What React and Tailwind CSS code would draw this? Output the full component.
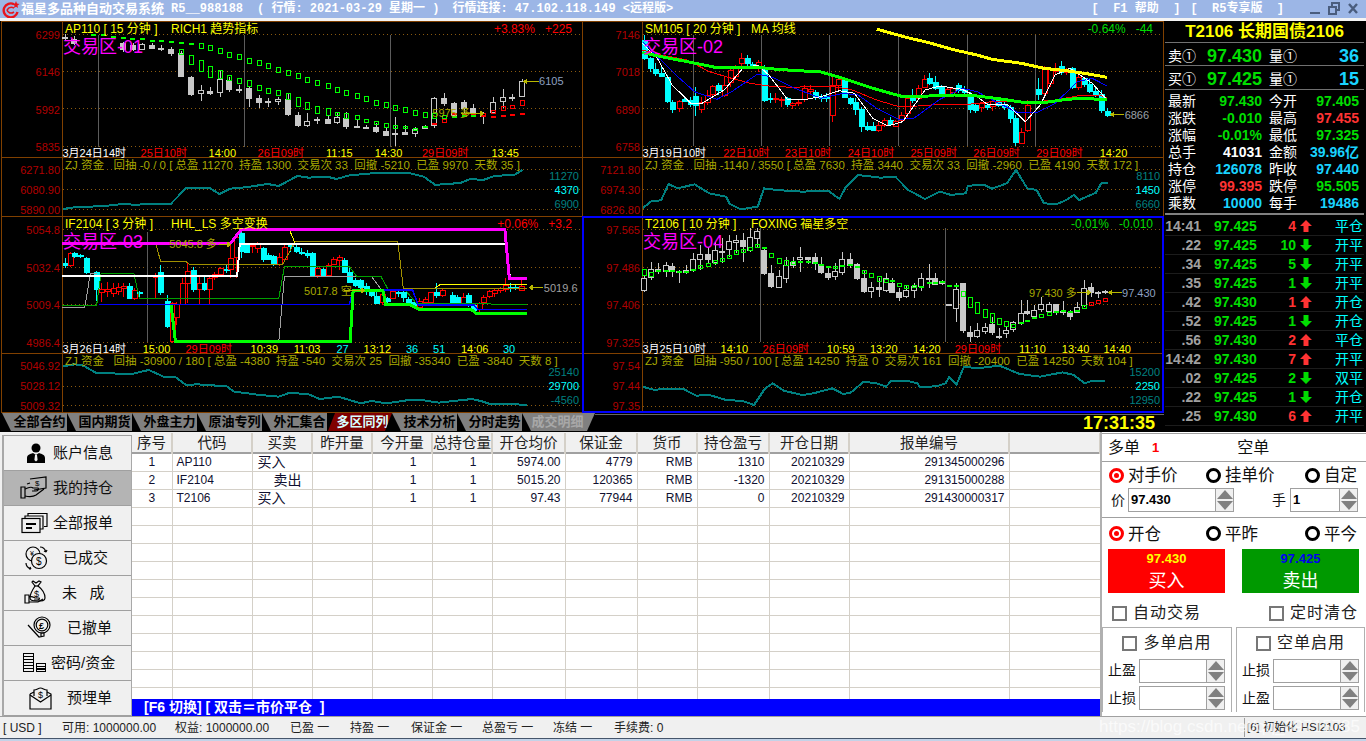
import React from "react";

const G = "#00ff00", R = "#ff0000";
const Y = "#ffff00", W = "#ffffff", RT = "#ff0000", C = "#00ffff";

const p = (a) => { const o = []; for (let i = 0; i < a.length; i += 2) o.push([a[i], a[i + 1]]); return o; };

const panels = [
  {
    ox: 0, oy: 0, left: 63, mainTop: 22, subTop: 158, axisW: "w-[60px]", chartW: "w-[519px]", up: "#c8c8c8", down: "#c8c8c8", bw: 5,
    title: "AP110 [ 15 分钟 ]", ind: "RICH1 趋势指标", pct: "+3.83%", chg: "+225", pc: "text-[#ff0000]", name: "交易区-01",
    axis: ["6299", "6146", "5992", "5835"], sub: ["6271.80", "6080.90", "5890.00"], right: ["11270", "4370", "6900"],
    zj: "ZJ 资金   回抽 -0 / 0 [ 总盈 11270  持盈 1300  交易次 33  回撤 -5210  已盈 9970  天数 35 ]",
    dots: [103, 213, 325, 438], subDots: [508, 568, 628], verts: [264, 657, 1050], vy: [105, 440],
    times: [[168, 460, "3月24日14时", W], [378, 460, "25日10时", RT], [561, 460, "14:00", Y], [693, 460, "26日09时", RT], [877, 460, "11:15", Y], [1008, 460, "14:30", Y], [1135, 460, "29日09时", RT], [1322, 460, "13:45", Y]],
    notes: [[1163, 340, "5975 多", "#a8a800"], [1450, 243, "6105", "#8ea0c0"]], arrows: [[1240, 1300, 338, 1], [1410, 1450, 242, 0]],
    candles: [[175, 102, 112, 114, 122, 1], [198, 108, 116, 128, 135, 0], [330, 125, 130, 148, 155, 0], [358, 130, 135, 148, 152, 0], [383, 128, 132, 146, 150, 1], [408, 130, 136, 144, 148, 0], [434, 135, 144, 146, 152, 0], [461, 140, 147, 160, 168, 0], [488, 152, 160, 228, 232, 0], [513, 228, 232, 282, 288, 0], [540, 255, 271, 280, 303, 1], [566, 262, 272, 278, 285, 0], [592, 210, 237, 277, 292, 1], [617, 230, 240, 266, 275, 0], [644, 255, 267, 270, 280, 0], [670, 258, 264, 294, 322, 0], [697, 285, 294, 306, 325, 0], [722, 295, 302, 305, 320, 0], [748, 290, 296, 302, 315, 1], [775, 282, 298, 342, 347, 0], [802, 335, 346, 376, 380, 0], [827, 340, 362, 375, 380, 1], [853, 350, 358, 359, 372, 0], [881, 345, 357, 368, 372, 0], [907, 335, 352, 368, 372, 1], [932, 335, 353, 378, 388, 0], [959, 360, 378, 381, 385, 0], [985, 375, 380, 382, 388, 0], [1012, 370, 380, 393, 398, 0], [1037, 385, 394, 405, 408, 0], [1063, 352, 398, 398, 438, 0], [1090, 375, 395, 401, 406, 0], [1117, 380, 387, 400, 410, 1], [1142, 375, 378, 385, 385, 0], [1168, 290, 295, 375, 385, 1], [1195, 278, 294, 310, 318, 0], [1222, 305, 308, 345, 355, 0], [1247, 300, 306, 325, 345, 0], [1273, 312, 325, 340, 350, 0], [1300, 335, 340, 350, 372, 1], [1327, 292, 305, 335, 340, 1], [1352, 268, 292, 303, 325, 1], [1378, 282, 290, 292, 302, 0], [1405, 238, 242, 288, 290, 1]],
    squares: [
      [250, 104, 0, G], [278, 105, 0, G], [303, 112, 0, G], [330, 114, 0, G], [356, 116, 0, G], [383, 118, 0, G], [408, 122, 0, G], [434, 123, 0, G], [461, 126, 0, G], [488, 129, 0, G], [513, 131, 0, G],
      ...[[540, 136], [566, 143], [592, 152], [617, 162], [644, 170], [670, 180], [697, 188], [722, 197], [748, 208], [775, 217], [802, 227], [827, 238], [853, 247], [881, 257], [907, 268], [932, 277], [959, 287], [985, 296], [1012, 306], [1037, 312], [1063, 321], [1090, 328], [1117, 336], [1142, 343]].map((a) => [a[0], a[1], 14, G]),
      [1168, 347, 14, G], [488, 154, 14, G], [513, 177, 28, G], [540, 197, 34, G], [566, 215, 34, G], [592, 223, 24, G], [617, 233, 16, G], [644, 240, 16, G], [670, 250, 18, G], [697, 262, 16, G], [722, 270, 16, G], [748, 278, 14, G], [775, 288, 18, G], [802, 305, 26, G], [827, 317, 22, G], [853, 327, 22, G], [881, 334, 20, G], [907, 340, 10, G], [932, 346, 14, G], [959, 352, 12, G], [985, 360, 8, G], [1012, 367, 10, G], [1037, 374, 12, G], [1063, 378, 10, G], [1090, 382, 6, G], [1117, 386, 4, G], [1142, 381, 0, G], [1195, 350, 10, G], [1222, 352, 0, G], [1247, 349, 0, G], [1273, 348, 0, G],
      [1168, 372, 0, R], [1195, 362, 10, R], [1222, 343, 0, R], [1247, 342, 0, R], [1273, 343, 0, R], [1300, 348, 0, R], [1327, 350, 0, R], [1352, 349, 0, R], [1378, 344, 0, R], [1405, 342, 0, R], [1300, 342, 10, R], [1327, 334, 8, R], [1352, 325, 12, R], [1378, 318, 10, R], [1405, 306, 14, R],
    ],
    lines: [],
    subLine: [170, 627, 200, 622, 280, 618, 330, 612, 360, 614, 460, 611, 500, 565, 565, 565, 590, 582, 620, 566, 660, 562, 720, 552, 750, 558, 800, 528, 830, 533, 880, 530, 905, 537, 940, 526, 1010, 519, 1100, 519, 1140, 530, 1170, 554, 1200, 553, 1240, 548, 1265, 537, 1300, 540, 1330, 528, 1385, 524, 1405, 510],
  },
  {
    ox: 583, oy: 0, left: 643, mainTop: 22, subTop: 158, axisW: "w-[59px]", chartW: "w-[520px]", up: "#ff0000", down: "#00ffff", bw: 4,
    title: "SM105 [ 20 分钟 ]", ind: "MA 均线", pct: "-0.64%", chg: "-44", pc: "text-[#00dd00]", name: "交易区-02",
    axis: ["7146", "7018", "6890", "6758"], sub: ["7121.80", "6974.30", "6826.80"], right: ["8110", "1450", "6660"],
    zj: "ZJ 资金   回抽 -1140 / 3550 [ 总盈 7630  持盈 3440  交易次 33  回撤 -2960  已盈 4190  天数 172 ]",
    dots: [103, 213, 325, 438], subDots: [508, 568, 628], verts: [295, 480, 663, 848, 1033, 1217], vy: [105, 438],
    times: [[160, 460, "3月19日10时", W], [377, 460, "22日10时", RT], [543, 460, "23日10时", RT], [712, 460, "24日10时", RT], [881, 460, "25日09时", RT], [1050, 460, "26日09时", RT], [1219, 460, "29日09时", RT], [1390, 460, "14:20", Y]],
    notes: [[1457, 345, "6866", "#9aa0a8"]], arrows: [[1420, 1455, 343, 0]],
    candles: [[165, 105, 120, 175, 180, 0], [180, 170, 175, 205, 215, 0], [195, 190, 207, 220, 228, 0], [210, 200, 220, 228, 232, 0], [225, 225, 232, 305, 310, 0], [240, 300, 306, 327, 340, 0], [257, 300, 304, 325, 335, 1], [272, 290, 296, 302, 305, 0], [287, 290, 300, 313, 320, 0], [302, 260, 288, 315, 347, 0], [318, 290, 306, 326, 340, 1], [333, 270, 284, 305, 315, 1], [348, 255, 257, 282, 290, 1], [364, 250, 255, 270, 285, 0], [380, 230, 256, 285, 290, 1], [395, 205, 210, 245, 260, 1], [410, 195, 200, 226, 240, 1], [425, 160, 175, 190, 200, 1], [440, 165, 175, 190, 200, 0], [455, 185, 192, 197, 205, 0], [470, 180, 186, 200, 215, 1], [487, 195, 205, 300, 305, 0], [502, 280, 295, 298, 310, 0], [517, 280, 295, 297, 310, 1], [533, 290, 296, 298, 320, 1], [548, 290, 293, 312, 322, 0], [563, 305, 310, 315, 328, 1], [578, 300, 305, 306, 318, 1], [594, 255, 265, 297, 305, 1], [610, 255, 266, 271, 285, 1], [625, 270, 275, 290, 300, 0], [640, 282, 290, 292, 305, 0], [655, 280, 288, 293, 305, 0], [670, 225, 254, 345, 365, 1], [687, 235, 238, 255, 270, 1], [702, 238, 240, 290, 295, 0], [717, 290, 295, 310, 315, 0], [733, 295, 306, 328, 345, 0], [749, 320, 327, 378, 395, 0], [764, 365, 378, 388, 392, 0], [779, 365, 378, 390, 392, 0], [794, 365, 375, 390, 395, 1], [810, 355, 360, 375, 380, 1], [825, 350, 360, 372, 378, 0], [840, 360, 362, 376, 378, 1], [855, 335, 344, 360, 368, 1], [871, 285, 294, 340, 358, 1], [886, 268, 288, 300, 310, 0], [902, 255, 265, 295, 300, 1], [917, 225, 238, 262, 265, 1], [932, 220, 234, 248, 256, 0], [948, 228, 245, 262, 270, 0], [963, 255, 260, 288, 292, 0], [978, 260, 268, 285, 290, 1], [993, 260, 263, 274, 280, 1], [1009, 250, 256, 270, 278, 0], [1024, 258, 266, 276, 290, 0], [1040, 275, 286, 328, 340, 0], [1055, 310, 316, 330, 340, 0], [1070, 305, 310, 322, 335, 1], [1086, 310, 315, 322, 330, 0], [1101, 300, 302, 318, 332, 1], [1117, 296, 300, 314, 322, 0], [1133, 305, 312, 322, 330, 0], [1148, 315, 322, 355, 368, 0], [1163, 345, 355, 428, 438, 0], [1179, 385, 396, 428, 432, 1], [1194, 300, 314, 390, 395, 1], [1224, 235, 268, 282, 300, 0], [1240, 198, 205, 280, 290, 1], [1255, 200, 208, 250, 260, 1], [1270, 190, 205, 215, 225, 1], [1285, 183, 198, 215, 225, 0], [1300, 205, 210, 215, 225, 1], [1316, 200, 205, 262, 268, 0], [1331, 225, 232, 262, 270, 1], [1347, 230, 234, 252, 260, 0], [1362, 235, 252, 272, 280, 0], [1378, 262, 272, 282, 290, 0], [1394, 270, 283, 332, 338, 0], [1410, 325, 333, 345, 350, 0]],
    squares: [],
    lines: [
      ["#ff0000", 1, [160, 150, 210, 165, 280, 180, 340, 215, 400, 235, 450, 250, 500, 258, 560, 262, 660, 258, 720, 268, 790, 300, 850, 320, 900, 318, 960, 313, 1020, 315, 1100, 305, 1200, 305, 1260, 302, 1330, 288, 1390, 285, 1410, 295]],
      ["#0000ff", 1, [160, 125, 200, 170, 250, 225, 300, 275, 360, 298, 400, 275, 470, 222, 510, 232, 570, 265, 640, 295, 700, 280, 740, 285, 790, 325, 850, 358, 890, 355, 960, 298, 1020, 265, 1060, 275, 1110, 305, 1170, 338, 1220, 338, 1270, 310, 1330, 245, 1370, 235, 1410, 258]],
      ["#ffffff", 1, [160, 130, 200, 175, 240, 255, 290, 310, 320, 310, 380, 270, 430, 205, 470, 195, 500, 225, 550, 298, 590, 300, 640, 290, 690, 272, 730, 280, 780, 355, 820, 378, 860, 365, 920, 270, 960, 258, 1020, 268, 1060, 290, 1090, 315, 1140, 312, 1190, 365, 1230, 315, 1270, 225, 1310, 205, 1370, 250, 1410, 300]],
      ["#00ff00", 3, [160, 158, 210, 170, 290, 187, 360, 203, 490, 204, 520, 208, 640, 216, 700, 235, 780, 265, 860, 290, 930, 288, 1000, 285, 1060, 288, 1130, 298, 1190, 308, 1240, 308, 1300, 298, 1350, 295, 1410, 300]],
      ["#ffff00", 3, [790, 87, 830, 100, 880, 115, 920, 125, 1000, 150, 1060, 165, 1100, 178, 1180, 190, 1240, 205, 1300, 212, 1360, 222, 1410, 232]],
    ],
    subLine: [160, 625, 185, 603, 210, 601, 230, 552, 255, 565, 300, 553, 340, 580, 385, 590, 395, 612, 425, 628, 470, 620, 487, 565, 520, 570, 590, 575, 660, 572, 690, 597, 705, 565, 740, 525, 800, 533, 840, 530, 875, 570, 920, 597, 960, 575, 990, 585, 1030, 580, 1035, 557, 1080, 555, 1100, 566, 1140, 550, 1165, 510, 1195, 565, 1220, 570, 1240, 610, 1275, 612, 1300, 600, 1320, 585, 1335, 600, 1380, 578, 1395, 548, 1412, 548],
  },
  {
    ox: 0, oy: 215, left: 63, mainTop: 217, subTop: 354, axisW: "w-[60px]", chartW: "w-[519px]", up: "#ff0000", down: "#00ffff", bw: 4,
    title: "IF2104 [ 3 分钟 ]", ind: "HHL_LS 多空变换", pct: "+0.06%", chg: "+3.2", pc: "text-[#ff0000]", name: "交易区-03",
    axis: ["5054.8", "5032.4", "5009.4", "4986.4"], sub: ["5046.92", "5028.12", "5009.32"], right: ["25140", "29700", "-4560"],
    zj: "ZJ 资金   回抽 -30900 / 180 [ 总盈 -4380  持盈 -540  交易次 25  回撤 -35340  已盈 -3840  天数 8 ]",
    dots: [43, 155, 268, 382], subDots: [512, 570], verts: [396], vy: [50, 380],
    times: [[168, 403, "3月26日14时", W], [384, 403, "15:00", Y], [499, 403, "29日09时", RT], [674, 403, "10:39", Y], [790, 403, "11:03", Y], [905, 403, "27", C], [978, 403, "13:12", Y], [1092, 403, "36", C], [1165, 403, "51", C], [1240, 403, "14:06", Y], [1353, 403, "30", C]],
    notes: [[455, 88, "5045.8 多", "#a8a800"], [818, 228, "5017.8 空", "#a8a800"], [1463, 218, "5019.6", "#a0a0a0"]], arrows: [[590, 620, 86, 1], [925, 980, 226, 1], [1425, 1460, 217, 0]],
    candles: [[175, 130, 145, 152, 160, 0], [187, 110, 115, 152, 155, 1], [200, 112, 115, 123, 130, 0], [216, 118, 120, 122, 128, 0], [232, 125, 130, 172, 178, 0], [258, 168, 172, 222, 258, 0], [273, 205, 222, 232, 260, 1], [288, 200, 222, 228, 245, 1], [303, 205, 218, 232, 245, 1], [317, 205, 217, 230, 240, 1], [331, 205, 212, 218, 245, 1], [346, 205, 212, 248, 250, 0], [360, 220, 226, 250, 255, 1], [375, 228, 232, 233, 250, 0], [418, 175, 182, 184, 250, 1], [431, 150, 170, 230, 240, 0], [448, 240, 257, 332, 340, 0], [463, 260, 265, 380, 385, 1], [474, 262, 268, 306, 330, 1], [490, 190, 203, 265, 270, 1], [504, 145, 168, 205, 265, 1], [520, 155, 165, 222, 230, 0], [534, 185, 205, 222, 270, 1], [549, 185, 205, 222, 228, 0], [563, 180, 190, 222, 268, 1], [576, 170, 178, 188, 195, 1], [592, 155, 160, 178, 185, 1], [607, 150, 162, 165, 175, 0], [620, 90, 128, 160, 190, 1], [634, 55, 65, 125, 190, 1], [648, 45, 55, 110, 130, 0], [662, 85, 87, 112, 115, 0], [677, 85, 90, 92, 115, 1], [691, 80, 85, 100, 115, 1], [707, 95, 98, 132, 140, 0], [722, 115, 120, 132, 135, 0], [735, 120, 122, 145, 152, 0], [750, 115, 125, 145, 152, 1], [765, 85, 97, 132, 140, 1], [780, 85, 90, 92, 110, 0], [795, 85, 95, 108, 115, 0], [810, 100, 110, 113, 120, 0], [825, 105, 113, 120, 130, 0], [838, 110, 115, 180, 185, 0], [853, 155, 160, 180, 188, 1], [868, 160, 162, 180, 185, 0], [881, 145, 150, 180, 185, 1], [897, 125, 133, 148, 150, 1], [912, 120, 125, 135, 165, 1], [925, 130, 135, 170, 175, 0], [940, 160, 172, 202, 205, 0], [955, 188, 195, 210, 215, 0], [968, 192, 195, 215, 225, 0], [984, 205, 212, 225, 240, 0], [997, 225, 232, 240, 245, 0], [1012, 230, 243, 264, 268, 0], [1027, 232, 238, 262, 270, 1], [1040, 245, 250, 258, 265, 0], [1055, 225, 228, 248, 252, 1], [1070, 228, 232, 235, 245, 0], [1083, 228, 232, 248, 262, 0], [1098, 245, 252, 265, 268, 0], [1113, 255, 262, 270, 278, 0], [1128, 250, 258, 275, 285, 1], [1143, 245, 252, 262, 268, 1], [1157, 230, 232, 262, 265, 1], [1172, 205, 232, 240, 250, 0], [1188, 220, 225, 240, 245, 1], [1215, 232, 240, 265, 270, 0], [1230, 240, 245, 268, 272, 0], [1245, 235, 245, 265, 270, 1], [1258, 235, 240, 270, 275, 0], [1273, 265, 270, 285, 292, 0], [1288, 262, 265, 282, 290, 1], [1300, 240, 245, 260, 265, 1], [1315, 225, 228, 242, 250, 1], [1330, 222, 225, 235, 245, 1], [1345, 215, 220, 225, 235, 1], [1358, 190, 210, 222, 230, 1], [1372, 205, 215, 218, 230, 0], [1385, 210, 215, 217, 225, 0], [1402, 195, 212, 224, 228, 1]],
    squares: [],
    lines: [
      ["#a0a0a0", 1, [168, 278, 228, 278, 243, 175, 262, 175]],
      ["#a0a0a0", 1, [750, 380, 765, 185, 1000, 185, 1030, 230]],
      ["#00a000", 1, [168, 270, 260, 270, 272, 175, 360, 175, 375, 250, 750, 250, 765, 155, 940, 155, 960, 185, 1025, 185, 1045, 225, 1090, 225, 1120, 265, 1417, 268]],
      ["#a09000", 1, [420, 88, 432, 140, 500, 140, 510, 148, 760, 148, 795, 78, 1070, 78, 1085, 220, 1417, 220]],
      ["#ffff00", 1, [780, 48, 795, 88]],
      ["#ffff00", 1, [1170, 218, 1185, 208, 1417, 208]],
      ["#0000ff", 1.5, [265, 268, 940, 268, 950, 225, 1110, 225, 1125, 270, 1275, 270, 1285, 284, 1417, 284]],
      ["#ffffff", 2, [168, 184, 638, 184, 645, 87, 1362, 87, 1372, 192, 1417, 192]],
      ["#ff00ff", 3, [168, 85, 620, 85, 650, 42, 1358, 42, 1370, 190, 1417, 190]],
      ["#00ff00", 3, [460, 270, 472, 380, 942, 380, 950, 225, 1030, 225, 1037, 268, 1100, 268, 1125, 282, 1265, 282, 1280, 294, 1417, 294]],
    ],
    subLine: [168, 455, 200, 448, 225, 452, 260, 475, 300, 475, 350, 478, 400, 465, 440, 485, 470, 485, 500, 510, 530, 508, 610, 514, 630, 530, 700, 540, 750, 545, 780, 533, 830, 538, 860, 552, 910, 545, 970, 565, 1000, 558, 1040, 565, 1100, 555, 1140, 556, 1180, 563, 1270, 552, 1300, 560, 1320, 568, 1390, 568, 1417, 570],
  },
  {
    ox: 583, oy: 215, left: 643, mainTop: 217, subTop: 354, axisW: "w-[59px]", chartW: "w-[520px]", up: "#c8c8c8", down: "#c8c8c8", bw: 5, active: true,
    title: "T2106 [ 10 分钟 ]", ind: "FOXING 福星多空", pct: "-0.01%", chg: "-0.010", pc: "text-[#00dd00]", name: "交易区-04",
    axis: ["97.565", "97.486", "97.406", "97.325"], sub: ["97.54", "97.44", "97.35"], right: ["15200", "2250", "12950"],
    zj: "ZJ 资金   回抽 -950 / 100 [ 总盈 14250  持盈 0  交易次 161  回撤 -20400  已盈 14250  天数 104 ]",
    dots: [43, 155, 268, 382], subDots: [515, 573], verts: [477, 974], vy: [40, 380],
    times: [[160, 403, "3月25日10时", W], [370, 403, "14:10", Y], [483, 403, "26日09时", RT], [656, 403, "10:59", Y], [772, 403, "13:20", Y], [888, 403, "14:20", Y], [1000, 403, "29日09时", RT], [1173, 403, "11:10", Y], [1288, 403, "13:40", Y], [1400, 403, "14:40", Y]],
    notes: [[1200, 235, "97.430 多", "#a8a800"], [1450, 234, "97.430", "#8ea0c0"]], arrows: [[1330, 1365, 232, 1], [1415, 1450, 232, 0]],
    candles: [[165, 180, 190, 225, 232, 1], [184, 140, 163, 188, 195, 1], [203, 145, 163, 170, 178, 0], [222, 140, 150, 168, 185, 1], [240, 145, 153, 168, 185, 0], [259, 165, 168, 172, 205, 0], [278, 150, 165, 172, 178, 0], [296, 115, 133, 165, 170, 1], [316, 90, 118, 132, 165, 1], [335, 95, 118, 132, 145, 0], [355, 80, 105, 142, 150, 1], [375, 70, 108, 112, 145, 1], [393, 60, 78, 103, 125, 1], [412, 60, 76, 82, 115, 1], [431, 55, 75, 92, 140, 0], [450, 40, 65, 105, 110, 1], [469, 40, 48, 68, 95, 1], [488, 95, 105, 173, 180, 0], [507, 150, 175, 215, 218, 0], [527, 165, 182, 215, 220, 1], [547, 125, 150, 188, 205, 1], [565, 125, 140, 150, 160, 0], [585, 95, 127, 133, 170, 1], [604, 125, 127, 132, 148, 0], [623, 115, 127, 145, 165, 0], [641, 125, 148, 172, 178, 0], [660, 160, 175, 188, 195, 0], [679, 145, 168, 182, 195, 1], [698, 110, 133, 173, 180, 1], [718, 115, 133, 152, 160, 0], [738, 145, 148, 190, 195, 0], [757, 165, 190, 230, 235, 0], [776, 200, 217, 230, 250, 1], [795, 190, 217, 222, 245, 0], [814, 175, 190, 225, 230, 1], [832, 190, 203, 230, 232, 0], [851, 220, 231, 245, 258, 0], [870, 210, 226, 245, 250, 1], [891, 205, 212, 225, 250, 1], [910, 175, 190, 215, 228, 1], [930, 148, 190, 192, 220, 1], [948, 175, 188, 205, 210, 0], [967, 195, 198, 205, 210, 0], [985, 266, 266, 269, 269, 0], [1004, 205, 222, 280, 322, 1], [1023, 205, 205, 345, 355, 0], [1042, 332, 352, 365, 380, 0], [1061, 325, 346, 365, 370, 1], [1082, 325, 337, 350, 358, 1], [1101, 305, 328, 352, 360, 0], [1120, 340, 362, 364, 372, 0], [1139, 335, 346, 356, 370, 1], [1158, 318, 322, 344, 350, 1], [1177, 255, 294, 325, 330, 1], [1195, 255, 288, 293, 300, 0], [1214, 270, 284, 302, 310, 1], [1233, 245, 268, 282, 290, 1], [1254, 262, 268, 290, 295, 1], [1273, 268, 268, 292, 300, 0], [1292, 258, 287, 291, 300, 0], [1311, 285, 290, 302, 315, 0], [1330, 260, 275, 290, 295, 1], [1349, 195, 218, 270, 275, 1], [1367, 205, 217, 232, 245, 0], [1386, 228, 232, 234, 250, 0], [1405, 225, 228, 232, 238, 0]],
    squares: [[165, 170, 18, G], [184, 176, 12, G], [203, 168, 0, G], [222, 168, 0, G], [240, 168, 0, G], [259, 170, 0, G], [278, 170, 0, G], [296, 164, 0, G], [316, 155, 8, G], [335, 147, 8, G], [355, 140, 10, G], [375, 133, 10, G], [393, 123, 8, G], [412, 111, 12, G], [431, 107, 8, G], [450, 100, 8, G], [469, 90, 10, G], [488, 98, 0, G], [507, 120, 12, G], [527, 135, 14, G], [547, 142, 16, G], [565, 143, 8, G], [585, 140, 0, G], [604, 142, 0, G], [623, 145, 0, G], [641, 150, 0, G], [660, 155, 0, G], [679, 157, 6, G], [698, 152, 0, G], [718, 151, 0, G], [738, 155, 0, G], [757, 168, 8, G], [776, 179, 12, G], [795, 190, 14, G], [814, 197, 10, G], [832, 198, 0, G], [851, 208, 10, G], [870, 213, 8, G], [891, 213, 6, G], [910, 215, 0, G], [930, 205, 0, G], [948, 203, 0, G], [967, 202, 0, G], [985, 213, 0, G], [1004, 214, 0, G], [1023, 235, 16, G], [1042, 260, 30, G], [1061, 278, 32, G], [1082, 294, 24, G], [1101, 306, 26, G], [1120, 318, 18, G], [1139, 325, 16, G], [1158, 330, 10, G], [1177, 325, 0, G], [1195, 317, 0, G], [1214, 310, 0, G], [1233, 300, 10, G], [1254, 295, 10, G], [1273, 290, 0, G], [1292, 288, 0, G], [1311, 290, 0, G], [1330, 288, 0, G], [1349, 275, 8, G], [1367, 265, 10, R], [1386, 259, 10, R], [1405, 252, 8, R]],
    lines: [],
    subLine: [160, 515, 190, 524, 240, 522, 270, 522, 305, 542, 340, 540, 385, 555, 430, 558, 460, 570, 490, 520, 510, 505, 540, 527, 590, 540, 620, 535, 670, 520, 700, 537, 720, 533, 755, 500, 790, 505, 815, 515, 830, 497, 870, 497, 900, 505, 905, 516, 950, 514, 975, 505, 985, 487, 1005, 508, 1025, 455, 1060, 460, 1120, 452, 1175, 477, 1230, 485, 1290, 472, 1320, 480, 1350, 505, 1370, 497, 1405, 497],
  },
];

function MainChart({ c }) {
  const X = (z) => z / 2.69 + c.ox - c.left;
  const Yy = (z) => z / 3 + c.oy - c.mainTop;
  const r = (v) => Math.round(v) + 0.5;
  const wd = c.chartW === "w-[519px]" ? 519 : 520;
  const ht = c.mainTop === 22 ? 135 : 136;
  return (
    <svg width={wd} height={ht} className="block overflow-visible" shapeRendering="crispEdges">
      {c.dots.map((d) => <line key={d} x1="0" x2={wd} y1={r(Yy(d))} y2={r(Yy(d))} stroke="#8a5a10" strokeDasharray="1 3" />)}
      {c.verts.map((v) => <line key={v} x1={r(X(v))} x2={r(X(v))} y1={Yy(c.vy[0])} y2={Yy(c.vy[1])} stroke="#5c5c5c" />)}
      {c.candles.map((k, i) => {
        const col = k[5] ? c.up : c.down;
        const x = r(X(k[0]));
        const top = Yy(k[2]), bot = Yy(k[3]);
        return (
          <g key={i}>
            <line x1={x} x2={x} y1={Yy(k[1])} y2={Yy(k[4])} stroke={col} />
            <rect x={x - Math.ceil(c.bw / 2)} y={Math.round(top) + 0.5} width={c.bw + (c.bw % 2 ? 0 : 1)} height={Math.max(1, Math.round(bot - top))} fill={k[5] ? "#000" : col} stroke={col} />
          </g>
        );
      })}
      {c.lines.map((l, i) => <polyline key={i} fill="none" stroke={l[0]} strokeWidth={l[1]} points={p(l[2]).map((q) => `${X(q[0])},${Yy(q[1])}`).join(" ")} />)}
      {c.squares.map((s, i) => {
        const x = r(X(s[0])) - 2;
        if (!s[2]) return <rect key={i} x={x - 0.5} y={Math.round(Yy(s[1])) - 1} width="5" height="2" fill={s[3]} />;
        const h = Math.max(2, Math.round(s[2] / 3));
        return <rect key={i} x={x} y={Math.round(Yy(s[1]) - h / 2) + 0.5} width="4" height={h} fill="none" stroke={s[3]} />;
      })}
      {c.arrows.map((a, i) => {
        const y = r(Yy(a[2]));
        const x1 = X(a[0]), x2 = X(a[1]);
        const pts = a[3] ? `${x2 + 1},${y} ${x2 - 3},${y - 3} ${x2 - 3},${y + 3}` : `${x1 - 1},${y} ${x1 + 3},${y - 3} ${x1 + 3},${y + 3}`;
        return (
          <g key={i}>
            <line x1={x1} x2={x2} y1={y} y2={y} stroke="#b8b800" />
            <polygon points={pts} fill="#b8b800" />
          </g>
        );
      })}
      <g fontSize="11" shapeRendering="auto">
        {c.times.map((t) => <text key={t[2]} x={X(t[0])} y={Yy(t[1]) + 3.5} fill={t[3]}>{t[2]}</text>)}
        {c.notes.map((t) => <text key={t[2]} x={X(t[0])} y={Yy(t[1]) + 4} fill={t[3]}>{t[2]}</text>)}
      </g>
    </svg>
  );
}

function SubChart({ c }) {
  const X = (z) => z / 2.69 + c.ox - c.left;
  const Yy = (z) => z / 3 + c.oy - c.subTop;
  const r = (v) => Math.round(v) + 0.5;
  const wd = c.chartW === "w-[519px]" ? 519 : 520;
  return (
    <svg width={wd} height="58" className="block" shapeRendering="crispEdges">
      {c.subDots.map((d) => <line key={d} x1="0" x2={wd} y1={r(Yy(d))} y2={r(Yy(d))} stroke="#8a5a10" strokeDasharray="1 3" />)}
      <polyline fill="none" stroke="#008080" strokeWidth="2" points={p(c.subLine).map((q) => `${X(q[0])},${Yy(q[1])}`).join(" ")} />
    </svg>
  );
}

function Panel({ c, first }) {
  return (
    <div className={`relative flex flex-col border-b border-[#804000] ${first ? "border-t" : ""} ${c.ox === 0 ? "border-l border-r" : "border-r"}`}>
      <div className={`flex border-b border-[#804000] ${c.mainTop === 22 ? "h-[136px]" : "h-[137px]"}`}>
        <div className={`${c.axisW} shrink-0 pt-[6px] ${c.mainTop === 22 ? "h-[132px]" : "h-[133px]"} flex flex-col justify-between items-end pr-[2px] text-[11px] leading-[14px] text-[#b00000]`}>
          {c.axis.map((a) => <span key={a}>{a}</span>)}
        </div>
        <div className={`relative ${c.chartW} border-l border-[#804000] box-content`}>
          <MainChart c={c} />
          <div className="absolute top-0 left-[2px] right-[10px] flex text-[12px] leading-[15px] whitespace-pre">
            <span className="w-[106px] text-[#ffff00]">{c.title}</span>
            <span className="text-[#ffff00]">{c.ind}</span>
            <span className={`ml-auto ${c.pc}`}>{c.pct}</span>
            <span className={`ml-[10px] ${c.pc}`}>{c.chg}</span>
          </div>
          <div className="absolute top-[14px] left-0 text-[18px] leading-[22px] text-[#ff00ff]">{c.name}</div>
        </div>
      </div>
      <div className="flex h-[58px]">
        <div className={`${c.axisW} shrink-0 pt-[5px] h-[59px] flex flex-col justify-between items-end pr-[2px] text-[11px] leading-[14px] text-[#b00000]`}>
          {c.sub.map((a) => <span key={a}>{a}</span>)}
        </div>
        <div className={`relative ${c.chartW} border-l border-[#804000] box-content overflow-hidden`}>
          <SubChart c={c} />
          <div className="absolute top-0 left-[2px] text-[11.5px] leading-[15px] text-[#a8a800] whitespace-pre">{c.zj}</div>
          <div className="absolute top-[11px] right-[3px] flex flex-col items-end text-[11px] leading-[14px]">
            <span className="text-[#008080]">{c.right[0]}</span>
            <span className="text-[#00ffff]">{c.right[1]}</span>
            <span className="text-[#008080]">{c.right[2]}</span>
          </div>
        </div>
      </div>
      {c.active && <div className="absolute -top-[1px] -left-[1px] -right-[1px] -bottom-[1px] border-2 border-[#0000ff] pointer-events-none" />}
    </div>
  );
}

const tabs = ["全部合约", "国内期货", "外盘主力", "原油专列", "外汇集合", "多区同列", "技术分析", "分时走势", "成交明细"];

function Tabs() {
  return (
    <div className="flex h-[19px] bg-black">
      <div className="flex pl-[2px] h-[18px]">
        {tabs.map((t, i) => (
          <div
            key={t}
            className={`flex items-center justify-center text-[13px] font-bold ${i === 8 ? "w-[73px] pl-[6px] pr-[8px] bg-[#808080] text-[#a8a8a8] [clip-path:polygon(0_0,100%_0,calc(100%-8px)_100%,9px_100%)]" : i === 5 ? "w-[65px] pl-[6px] bg-[#800000] text-[#d8ffff] [clip-path:polygon(8px_0,100%_0,calc(100%-7px)_100%,1px_100%)]" : "w-[65px] pl-[10px] bg-[#808080] text-black [clip-path:polygon(0_0,100%_0,100%_100%,9px_100%)]"}`}
          >
            {t}
          </div>
        ))}
      </div>
      <div className="flex-1 flex justify-end items-center pr-[9px] border-t border-[#666666] mt-[1px]">
        <span className="text-[18px] font-bold leading-[17px] text-[#ffff00]">17:31:35</span>
      </div>
    </div>
  );
}

const GR = "text-[#00dd00]", RD = "text-[#ff3333]", CY = "text-[#19d3ff]", WH = "text-white";
const quote = [
  ["最新", "97.430", GR, "今开", "97.405", GR],
  ["涨跌", "-0.010", GR, "最高", "97.455", RD],
  ["涨幅", "-0.01%", GR, "最低", "97.325", GR],
  ["总手", "41031", WH, "金额", "39.96亿", CY],
  ["持仓", "126078", CY, "昨收", "97.440", CY],
  ["涨停", "99.395", RD, "跌停", "95.505", GR],
  ["乘数", "10000", CY, "每手", "19486", CY],
];
const ticks = [
  ["14:41", "97.425", "4", 1, "平仓"], [".22", "97.425", "10", 0, "开平"], [".34", "97.425", "5", 0, "开平"], [".35", "97.425", "1", 0, "开平"],
  [".42", "97.430", "1", 1, "开仓"], [".52", "97.425", "1", 0, "开仓"], [".56", "97.430", "2", 1, "平仓"], ["14:42", "97.430", "7", 1, "开平"],
  [".02", "97.425", "2", 0, "双平"], [".22", "97.425", "1", 0, "开仓"], [".25", "97.430", "6", 1, "开平"],
];

function BlockArrow({ up }) {
  return (
    <svg width="12" height="12" viewBox="0 0 12 12" className="block">
      {up ? <polygon points="6,0 12,6 8.5,6 8.5,12 3.5,12 3.5,6 0,6" fill="#ff3333" /> : <polygon points="6,12 12,6 8.5,6 8.5,0 3.5,0 3.5,6 0,6" fill="#00dd00" />}
    </svg>
  );
}

function Quote() {
  return (
    <div className="w-[201px] bg-black flex flex-col pl-[1px] pr-[1px] text-white">
      <div className="h-[21px] mt-[1px] border-b border-[#707070] flex items-center justify-center text-[17px] font-bold text-[#ffff00]">T2106 长期国债2106</div>
      {[["卖①", "97.430", "36", "h-[23px]"], ["买①", "97.425", "15", "h-[24px]"]].map((a) => (
        <div key={a[0]} className={`${a[3]} border-b border-[#707070] grid grid-cols-[97px_100px] items-center`}>
          <div className="flex justify-between pl-[3px] items-center">
            <span className="text-[14px]">{a[0]}</span>
            <span className="text-[18px] font-bold text-[#00dd00]">{a[1]}</span>
          </div>
          <div className="flex justify-between pl-[7px] pr-[3px] items-center">
            <span className="text-[14px]">量①</span>
            <span className="text-[18px] font-bold text-[#19d3ff]">{a[2]}</span>
          </div>
        </div>
      ))}
      <div className="pt-[3px] pb-[1px] border-b-2 border-[#808080]">
        {quote.map((q) => (
          <div key={q[0]} className="h-[17px] grid grid-cols-[97px_100px] items-center leading-[17px]">
            <div className="flex justify-between pl-[3px]">
              <span className="text-[14px]">{q[0]}</span>
              <span className={`text-[14px] font-bold ${q[2]}`}>{q[1]}</span>
            </div>
            <div className="flex justify-between pl-[7px] pr-[3px]">
              <span className="text-[14px]">{q[3]}</span>
              <span className={`text-[14px] font-bold ${q[5]}`}>{q[4]}</span>
            </div>
          </div>
        ))}
      </div>
      <div className="pt-[2px] flex-1">
        {ticks.map((t, i) => (
          <div key={i} className="h-[19px] flex items-center border-b border-[#1c1c1c]">
            <span className="w-[36px] text-right text-[14px] font-bold text-[#a0a0a0]">{t[0]}</span>
            <span className="w-[58px] pl-[13px] text-[14px] font-bold text-[#00dd00]">{t[1]}</span>
            <span className={`w-[37px] text-right text-[14px] font-bold ${t[3] ? "text-[#ff3333]" : "text-[#00dd00]"}`}>{t[2]}</span>
            <span className="ml-[4px] w-[12px]"><BlockArrow up={t[3]} /></span>
            <span className="flex-1 text-right text-[14px] text-[#00ffff] pr-[1px]">{t[4]}</span>
          </div>
        ))}
      </div>
    </div>
  );
}

const S = { fill: "none", stroke: "#000", strokeWidth: 1.2, shapeRendering: "auto" };
const icons = {
  user: (
    <svg width="22" height="22" viewBox="0 0 22 22">
      <circle cx="11" cy="6" r="4.5" fill="#000" />
      <path d="M2 21v-5c0-3 3-4 6-5l3 2 3-2c3 1 6 2 6 5v5z" fill="#000" />
      <path d="M10 13h2l.6 5-1.6 1.5L9.4 18z" fill="#f0f0f0" />
    </svg>
  ),
  hand: (
    <svg width="28" height="24" viewBox="0 0 28 24" {...S}>
      <path d="M10 3l16-2v11l-12 2" />
      <path d="M7 8l3-1" />
      <path d="M1 11h4v11H1z" />
      <path d="M5 13c3-1 6-3 8-1h5c1 1 0 3-2 3h-4M5 20c5 1 8 1 11-1l8-6" />
      <text x="15" y="10" fontSize="8" fill="#000" stroke="none">$</text>
    </svg>
  ),
  cards: (
    <svg width="27" height="22" viewBox="0 0 27 22" {...S}>
      <rect x="1" y="6.5" width="18" height="14" fill="#f0f0f0" />
      <path d="M4 6V4h18v13h-3M7 3.5V1.5h19v13h-3" />
      <path d="M5 12h10M5 16h6" strokeWidth="2" />
    </svg>
  ),
  coins: (
    <svg width="24" height="26" viewBox="0 0 24 26" {...S}>
      <circle cx="9" cy="9" r="7" />
      <circle cx="15" cy="16" r="7.5" fill="#f0f0f0" />
      <text x="12" y="20" fontSize="10" fill="#000" stroke="none">$</text>
      <text x="6" y="11" fontSize="7" fill="#000" stroke="none">¥</text>
      <path d="M16 2c3 0 5 2 6 5m0 0l-2-1m2 1l1-2M2 18c0 3 2 5 5 6m0 0l-2 0m2 0l-1-2" />
    </svg>
  ),
  bag: (
    <svg width="25" height="26" viewBox="0 0 25 26" {...S}>
      <path d="M9 1l3 2 3-2 2 1-3 4c4 3 7 8 7 12 0 3-3 3-8 3s-7-1-7-3c0-4 3-9 5-12L8 2z" />
      <path d="M10 6h5" />
      <text x="10" y="17" fontSize="9" fill="#000" stroke="none">$</text>
      <path d="M1 15h4v8H1zM5 17c3-1 4 0 6 1h4c1 1 0 2-2 2h-3M5 22h9l5-3" />
    </svg>
  ),
  pound: (
    <svg width="25" height="24" viewBox="0 0 25 24" {...S}>
      <circle cx="15" cy="9" r="8" />
      <circle cx="15" cy="9" r="5.8" />
      <text x="12" y="12.5" fontSize="9" fontWeight="700" fill="#000" stroke="none">£</text>
      <path d="M1 9l11 12 5-1v-3l-3 0 0 3" />
    </svg>
  ),
  list: (
    <svg width="24" height="20" viewBox="0 0 24 20" {...S} shapeRendering="crispEdges">
      <rect x="0.5" y="0.5" width="10" height="18" />
      <path d="M1 3.5h9M1 6.5h9M1 9.5h9M1 12.5h9M1 15.5h9" />
      <rect x="13.5" y="10.5" width="9" height="8" />
      <path d="M14 13.5h8M14 16h8" />
    </svg>
  ),
  env: (
    <svg width="23" height="23" viewBox="0 0 23 23" {...S}>
      <path d="M1 7v15h21V7l-4-2M5 5L1 7" />
      <path d="M1 8l10.5 7L22 8" />
      <path d="M5 9V3c3 0 4-2 6.5-2S15 3 18 3v6" />
      <text x="9" y="10.5" fontSize="9" fill="#000" stroke="none">$</text>
    </svg>
  ),
};

const menu = [
  ["账户信息", "user", "pl-[21px]", "ml-[6px]"],
  ["我的持仓", "hand", "pl-[16px]", "ml-[5px]"],
  ["全部报单", "cards", "pl-[17px]", "ml-[5px]"],
  ["已成交", "coins", "pl-[20px]", "ml-[15px]"],
  ["未   成", "bag", "pl-[20px]", "ml-[13px]"],
  ["已撤单", "pound", "pl-[23px]", "ml-[15px]"],
  ["密码/资金", "list", "pl-[19px]", "ml-[4px]"],
  ["预埋单", "env", "pl-[25px]", "ml-[15px]"],
];

function Menu() {
  return (
    <div className="w-[133px] pt-[3px] pl-[2px] shrink-0">
      <div className="border-t border-[#a0a0a0] border-l-2 border-r-2 border-l-[#a8a8a8] border-r-[#a8a8a8]">
        {menu.map((m, i) => (
          <div key={m[0]} className={`h-[35px] flex items-center border-b border-[#a0a0a0] ${m[2]} ${i === 1 ? "bg-[#b4b4b4]" : "bg-[#f0f0f0]"}`}>
            {icons[m[1]]}
            <span className={`${m[3]} text-[15px] text-[#111111] whitespace-pre`}>{m[0]}</span>
          </div>
        ))}
      </div>
    </div>
  );
}

const cols = [40, 80, 60, 60, 60, 60, 73, 72, 60, 72, 80, 160, 91];
const colCls = ["w-[40px]", "w-[80px]", "w-[60px]", "w-[60px]", "w-[60px]", "w-[60px]", "w-[73px]", "w-[72px]", "w-[60px]", "w-[72px]", "w-[80px]", "w-[160px]", "w-[91px]"];
const heads = ["序号", "代码", "买卖", "昨开量", "今开量", "总持仓量", "开仓均价", "保证金", "货币", "持仓盈亏", "开仓日期", "报单编号", ""];
const rows = [
  ["1", "AP110", "买入", "", "1", "1", "5974.00", "4779", "RMB", "1310", "20210329", "291345000296"],
  ["2", "IF2104", "卖出", "", "1", "1", "5015.20", "120365", "RMB", "-1320", "20210329", "291315000288"],
  ["3", "T2106", "买入", "", "1", "1", "97.43", "77944", "RMB", "0", "20210329", "291430000317"],
];

function Positions() {
  const all = [...rows, ...Array.from({ length: 11 }, () => Array(13).fill(""))];
  return (
    <div className="w-[968px] flex flex-col shrink-0 -ml-[1px]">
      <div className="h-[266px] mt-[1px] overflow-hidden bg-white">
        <table className="table-fixed border-collapse w-[968px]">
          <colgroup>{cols.map((w, i) => <col key={i} className={colCls[i]} />)}</colgroup>
          <thead>
            <tr className="h-[20px] bg-[#f0f0f0] border-b-2 border-[#a0a0a0]">
              {heads.map((h, i) => <th key={i} className="p-0 font-normal text-[14.5px] leading-[18px] text-[#222222] text-center border-r-2 border-[#d4d0c8] whitespace-nowrap overflow-hidden">{h}</th>)}
            </tr>
          </thead>
          <tbody>
            {all.map((r, i) => (
              <tr key={i} className="h-[18px] border-b border-[#d4d0c8]">
                {cols.map((_, j) => {
                  const v = r[j] || "";
                  let cls = "text-right pr-[4px]";
                  if (j === 0) cls = "text-center";
                  if (j === 1) cls = "text-left pl-[4px]";
                  if (j === 2) cls = v === "卖出" ? "text-left pl-[21px]" : "text-left pl-[5px]";
                  if (j === 4 || j === 5) cls = "text-right pr-[15px]";
                  return <td key={j} className={`p-0 text-[12px] leading-[16px] text-[#101030] border-r border-[#d4d0c8] ${cls} ${j === 2 ? "text-[14px]" : ""}`}>{v}</td>;
                })}
              </tr>
            ))}
          </tbody>
        </table>
      </div>
      <div className="h-[17px] bg-[#0000ff] text-white font-bold text-[14px] leading-[17px] pl-[12px] whitespace-pre">[F6 切换] [ 双击＝市价平仓  ]</div>
    </div>
  );
}

function Radio({ on, label, cls }) {
  return (
    <div className={`flex items-center ${cls}`}>
      <span className={`w-[15px] h-[15px] rounded-full border-[3px] flex items-center justify-center bg-white ${on ? "border-[#ff0000]" : "border-black"}`}>
        {on && <span className="w-[5px] h-[5px] rounded-full bg-[#ff0000]" />}
      </span>
      <span className="ml-[4px] text-[16.5px] leading-[18px] text-[#111111]">{label}</span>
    </div>
  );
}

function Stepper() {
  return (
    <span className="w-[18px] h-full border-l border-[#a0a0a0] bg-[#f0f0f0] flex flex-col items-center justify-center gap-[2px] shrink-0">
      <svg width="16" height="9" className="block"><polygon points="8,0 16,9 0,9" fill="#808080" /></svg>
      <svg width="16" height="9" className="block"><polygon points="0,0 16,0 8,9" fill="#808080" /></svg>
    </span>
  );
}

function Spin({ w, value }) {
  return (
    <span className={`${w} h-[24px] border border-[#a0a0a0] bg-white flex items-center`}>
      <span className="flex-1 pl-[2px] text-[13px] font-bold text-black">{value}</span>
      <Stepper />
    </span>
  );
}

function Check({ label, cls }) {
  return (
    <div className={`flex items-center ${cls}`}>
      <span className="w-[15px] h-[15px] border-2 border-[#777777] bg-white shrink-0" />
      <span className="ml-[6px] text-[16px] tracking-[1px] leading-[18px] text-[#222222]">{label}</span>
    </div>
  );
}

function Stop({ title, a, b, cls }) {
  return (
    <div className={`${cls} border border-[#b0b0b0] border-b-0 flex flex-col`}>
      <Check label={title} cls="justify-center h-[29px] mt-[1px]" />
      {[a, b].map((l) => (
        <div key={l} className="flex items-center h-[28px] pl-[5px]">
          <span className="w-[31px] text-[14px] text-[#111111]">{l}</span>
          <Spin w="w-[86px]" value="" />
        </div>
      ))}
    </div>
  );
}

function Trade() {
  return (
    <div className="flex-1 bg-white border-l-2 border-[#b0b0b0] flex flex-col">
      <div className="h-[29px] mt-[1px] pt-[1px] border-t border-b border-[#a0a0a0] flex items-center pl-[6px] text-[16px] text-[#111111]">
        <span>多单</span>
        <span className="ml-[12px] text-[#ff0000] font-bold text-[13px]">1</span>
        <span className="ml-[78px]">空单</span>
      </div>
      <div className="h-[56px] border-b border-[#a0a0a0] pl-[7px] flex flex-col">
        <div className="flex items-center h-[26px]">
          <Radio on label="对手价" cls="w-[97px]" />
          <Radio label="挂单价" cls="w-[99px]" />
          <Radio label="自定" cls="" />
        </div>
        <div className="flex items-center h-[24px]">
          <span className="ml-[2px] w-[17px] text-[14px] text-[#111111]">价</span>
          <Spin w="w-[106px]" value="97.430" />
          <span className="ml-[38px] w-[18px] text-[14px] text-[#111111]">手</span>
          <Spin w="w-[68px]" value="1" />
        </div>
      </div>
      <div className="flex items-center h-[31px] pl-[7px]">
        <Radio on label="开仓" cls="w-[97px]" />
        <Radio label="平昨" cls="w-[99px]" />
        <Radio label="平今" cls="" />
      </div>
      <div className="flex pl-[6px] gap-[17px]">
        <div className="w-[117px] h-[44px] bg-[#ff0000] flex flex-col items-center leading-none">
          <span className="text-[13px] font-bold text-[#ffff00] mt-[3px]">97.430</span>
          <span className="text-[18px] text-white mt-[7px]">买入</span>
        </div>
        <div className="w-[117px] h-[44px] bg-[#009900] flex flex-col items-center leading-none">
          <span className="text-[13px] font-bold text-[#0000ee] mt-[3px]">97.425</span>
          <span className="text-[18px] text-white mt-[7px]">卖出</span>
        </div>
      </div>
      <div className="flex items-center justify-between h-[34px] pt-[6px] pl-[10px] pr-[8px]">
        <Check label="自动交易" cls="" />
        <Check label="定时清仓" cls="" />
      </div>
      <div className="flex gap-[4px] h-[85px]">
        <Stop title="多单启用" a="止盈" b="止损" cls="w-[130px]" />
        <Stop title="空单启用" a="止损" b="止盈" cls="w-[129px]" />
      </div>
    </div>
  );
}

const statusCells = [
  ["[ USD ]", "w-[59px]"], ["可用: 1000000.00", "w-[113px]"], ["权益: 1000000.00", "w-[115px]"], ["已盈 一", "w-[60px]"],
  ["持盈 一", "w-[61px]"], ["保证金 一", "w-[71px]"], ["总盈亏 一", "w-[71px]"], ["冻结 一", "w-[61px]"], ["手续费: 0", "w-[80px]"],
];

function Status() {
  return (
    <div className="relative h-[22px] bg-[#f0f0f0] border-t border-[#a0a0a0] flex items-center pl-[3px] text-[12px] text-[#222222]">
      {statusCells.map((c) => <span key={c[0]} className={`${c[1]} whitespace-pre`}>{c[0]}</span>)}
      <span className="ml-auto mr-[12px] w-[110px] h-[19px] border-l border-[#a0a0a0] pl-[2px] leading-[19px] text-[11.5px] whitespace-pre">[6] 初始化 HSI2103</span>
      <span className="absolute right-[6px] top-0 text-[17px] leading-[20px] text-white/70 pointer-events-none whitespace-pre font-['Liberation_Sans',sans-serif]">https://blog.csdn.net/qq_39715785</span>
    </div>
  );
}

function TitleBar() {
  const mono = "font-['Liberation_Mono','Noto_Sans_CJK_SC',monospace] text-[12px]";
  return (
    <div className="h-[18px] bg-[#9cb6e6] flex items-center text-white font-bold text-[13px] whitespace-pre">
      <svg width="18" height="17" viewBox="0 0 18 17" className="ml-[2px] shrink-0">
        <path d="M12 3.2A7 7 0 1 0 15.5 11" fill="none" stroke="#e8141c" strokeWidth="2.4" />
        <path d="M5 9c2-3 5-3 7-2M5 9c1 3 4 4 7 2" fill="none" stroke="#e8141c" strokeWidth="1.6" />
        <polygon points="14,0 15,2.5 17.5,3 15.5,4.6 16,7 14,5.7 12,7 12.5,4.6 10.5,3 13,2.5" fill="#e8141c" />
      </svg>
      <span className="ml-[1px] text-[13px]">福星多品种自动交易系统</span>
      <span className={`ml-[7px] ${mono}`}>R5__988188</span>
      <span className={`ml-[14px] ${mono}`}>( 行情: 2021-03-29 星期一 )</span>
      <span className={`ml-[13px] ${mono}`}>行情连接: 47.102.118.149 &lt;远程版&gt;</span>
      <span className={`ml-auto ${mono}`}>[  F1 帮助  ]</span>
      <span className={`ml-[10px] ${mono}`}>[  R5专享版  ]</span>
      <svg width="50" height="14" viewBox="0 0 50 14" className="ml-[26px] mr-[6px] shrink-0" fill="none" stroke="#4a5d7e" strokeWidth="2" shapeRendering="crispEdges">
        <path d="M0 11h10" strokeWidth="2.5" />
        <path d="M19 5h7v7h-7zM22 4V1h7v7h-3" />
        <path d="M39 2l8 9M47 2l-8 9" shapeRendering="auto" strokeWidth="2.4" />
      </svg>
    </div>
  );
}

export default function App() {
  return (
    <div className="w-[1366px] h-[741px] overflow-hidden bg-[#f0f0f0] flex flex-col font-['Liberation_Sans','Noto_Sans_CJK_SC',sans-serif]">
      <TitleBar />
      <div className="h-[3px] bg-[#f4f4f4]" />
      <div className="flex h-[411px] bg-black">
        <div className="w-[1164px] flex flex-col">
          <div className="flex pl-[1px]">
            <Panel c={panels[0]} first />
            <Panel c={panels[1]} first />
          </div>
          <div className="flex pl-[1px]">
            <Panel c={panels[2]} />
            <Panel c={panels[3]} />
          </div>
          <Tabs />
        </div>
        <Quote />
      </div>
      <div className="flex h-[284px]">
        <Menu />
        <Positions />
        <Trade />
      </div>
      <Status />
      <div className="h-[3px] bg-[#c3d3e8] border-t border-[#45556b]" />
    </div>
  );
}
